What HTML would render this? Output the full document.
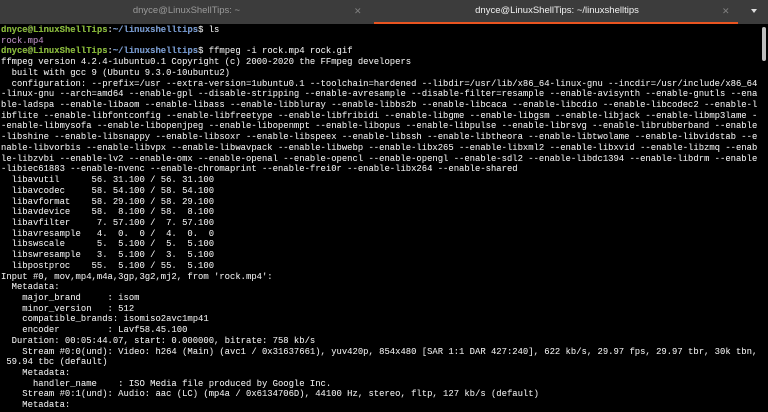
<!DOCTYPE html>
<html><head><meta charset="utf-8"><style>
html,body{margin:0;padding:0;width:768px;height:412px;overflow:hidden;background:#000;}
.tabs{position:absolute;left:0;top:0;width:768px;height:24px;background:#3c3c3c;font-family:"Liberation Sans",sans-serif;font-size:9.5px;}
.tab{position:absolute;top:0;height:24px;line-height:22px;text-align:center;}
.t1{left:0;width:373px;color:#9a9a9a;}
.t2{left:374px;width:366px;color:#f2f2f2;}
.x{position:absolute;top:0;line-height:22px;color:#808080;font-size:9px;}
.ul{position:absolute;left:374px;top:22px;width:364px;height:2px;background:#e95420;}
.dd{position:absolute;left:751px;top:9px;width:0;height:0;border-left:3.5px solid transparent;border-right:3.5px solid transparent;border-top:4px solid #ddd;}
pre{position:absolute;left:1px;top:25px;margin:0;font-family:"Liberation Mono",monospace;font-size:8.9px;line-height:10.72px;color:#dcdcdc;white-space:pre;text-shadow:0 0 0.3px #dcdcdc;}
.g{color:#7fb52a;font-weight:bold}.b{color:#6a8fc8;font-weight:bold}.p{color:#a070a8}
.sb{position:absolute;left:762px;top:27px;width:4px;height:34px;background:#bdbdbd;border-radius:2px;}
</style></head><body>
<div class="tabs">
<div class="tab t1">dnyce@LinuxShellTips: ~</div>
<div class="tab t2">dnyce@LinuxShellTips: ~/linuxshelltips</div>
<span class="x" style="left:354px">✕</span>
<span class="x" style="left:722px">✕</span>
<div class="ul"></div>
<div class="dd"></div>
</div>
<pre><span class="g">dnyce@LinuxShellTips</span>:<span class="b">~/linuxshelltips</span>$ ls
<span class="p">rock.mp4</span>
<span class="g">dnyce@LinuxShellTips</span>:<span class="b">~/linuxshelltips</span>$ ffmpeg -i rock.mp4 rock.gif
ffmpeg version 4.2.4-1ubuntu0.1 Copyright (c) 2000-2020 the FFmpeg developers
  built with gcc 9 (Ubuntu 9.3.0-10ubuntu2)
  configuration: --prefix=/usr --extra-version=1ubuntu0.1 --toolchain=hardened --libdir=/usr/lib/x86_64-linux-gnu --incdir=/usr/include/x86_64
-linux-gnu --arch=amd64 --enable-gpl --disable-stripping --enable-avresample --disable-filter=resample --enable-avisynth --enable-gnutls --ena
ble-ladspa --enable-libaom --enable-libass --enable-libbluray --enable-libbs2b --enable-libcaca --enable-libcdio --enable-libcodec2 --enable-l
ibflite --enable-libfontconfig --enable-libfreetype --enable-libfribidi --enable-libgme --enable-libgsm --enable-libjack --enable-libmp3lame -
-enable-libmysofa --enable-libopenjpeg --enable-libopenmpt --enable-libopus --enable-libpulse --enable-librsvg --enable-librubberband --enable
-libshine --enable-libsnappy --enable-libsoxr --enable-libspeex --enable-libssh --enable-libtheora --enable-libtwolame --enable-libvidstab --e
nable-libvorbis --enable-libvpx --enable-libwavpack --enable-libwebp --enable-libx265 --enable-libxml2 --enable-libxvid --enable-libzmq --enab
le-libzvbi --enable-lv2 --enable-omx --enable-openal --enable-opencl --enable-opengl --enable-sdl2 --enable-libdc1394 --enable-libdrm --enable
-libiec61883 --enable-nvenc --enable-chromaprint --enable-frei0r --enable-libx264 --enable-shared
  libavutil      56. 31.100 / 56. 31.100
  libavcodec     58. 54.100 / 58. 54.100
  libavformat    58. 29.100 / 58. 29.100
  libavdevice    58.  8.100 / 58.  8.100
  libavfilter     7. 57.100 /  7. 57.100
  libavresample   4.  0.  0 /  4.  0.  0
  libswscale      5.  5.100 /  5.  5.100
  libswresample   3.  5.100 /  3.  5.100
  libpostproc    55.  5.100 / 55.  5.100
Input #0, mov,mp4,m4a,3gp,3g2,mj2, from 'rock.mp4':
  Metadata:
    major_brand     : isom
    minor_version   : 512
    compatible_brands: isomiso2avc1mp41
    encoder         : Lavf58.45.100
  Duration: 00:05:44.07, start: 0.000000, bitrate: 758 kb/s
    Stream #0:0(und): Video: h264 (Main) (avc1 / 0x31637661), yuv420p, 854x480 [SAR 1:1 DAR 427:240], 622 kb/s, 29.97 fps, 29.97 tbr, 30k tbn,
 59.94 tbc (default)
    Metadata:
      handler_name    : ISO Media file produced by Google Inc.
    Stream #0:1(und): Audio: aac (LC) (mp4a / 0x6134706D), 44100 Hz, stereo, fltp, 127 kb/s (default)
    Metadata:</pre>
<div class="sb"></div>
</body></html>
